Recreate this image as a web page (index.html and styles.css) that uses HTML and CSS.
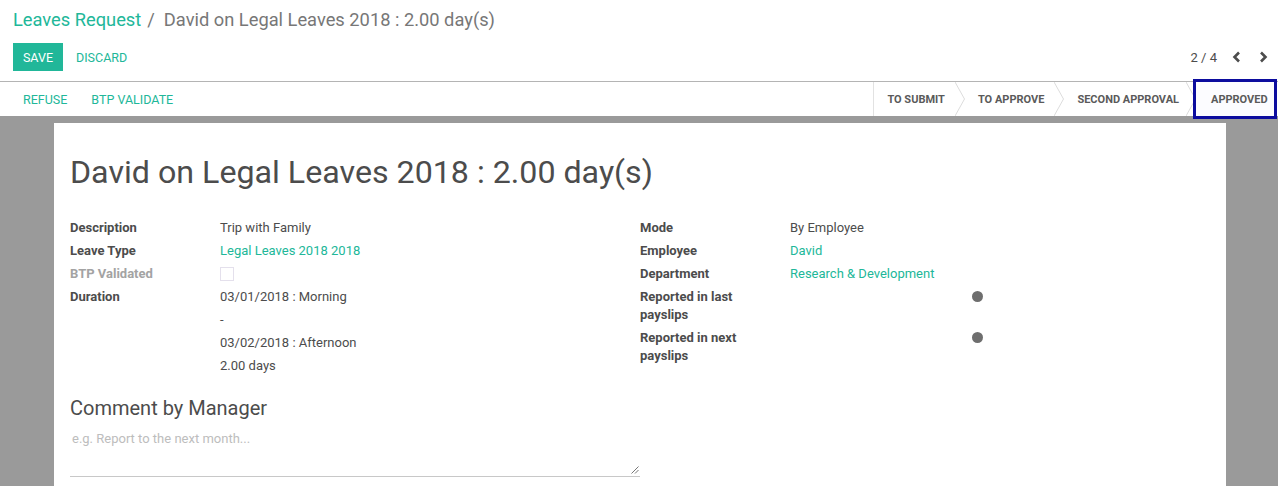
FILE: index.html
```html
<!DOCTYPE html>
<html>
<head>
<meta charset="utf-8">
<link rel="stylesheet" href="styles.css">
</head>
<body>
<div class="control-panel">
  <div class="breadcrumb">
    <span class="bc-link">Leaves Request</span><span class="bc-sep">/</span><span class="bc-active">David on Legal Leaves 2018 : 2.00 day(s)</span>
  </div>
  <div class="cp-row">
    <div class="cp-buttons">
      <button class="btn-primary">SAVE</button>
      <button class="btn-link">DISCARD</button>
    </div>
    <div class="pager">
      <span class="pager-value">2 / 4</span>
      <button class="pager-btn"><svg width="9" height="12" viewBox="0 0 9 12"><polyline points="7,1.5 2.5,6 7,10.5" fill="none" stroke="#4c4c4c" stroke-width="2.6"/></svg></button>
      <button class="pager-btn"><svg width="9" height="12" viewBox="0 0 9 12"><polyline points="2,1.5 6.5,6 2,10.5" fill="none" stroke="#4c4c4c" stroke-width="2.6"/></svg></button>
    </div>
  </div>
</div>
<div class="statusbar">
  <div class="sb-buttons">
    <button class="btn-link sb-btn">REFUSE</button>
    <button class="btn-link sb-btn">BTP VALIDATE</button>
  </div>
  <div class="sb-status">
    <div class="st first">TO SUBMIT<svg class="arrow" viewBox="0 0 10 34" preserveAspectRatio="none"><polyline points="0,0 9.5,17 0,34" fill="none" stroke="#dcdcdc" stroke-width="1"/></svg></div>
    <div class="st">TO APPROVE<svg class="arrow" viewBox="0 0 10 34" preserveAspectRatio="none"><polyline points="0,0 9.5,17 0,34" fill="none" stroke="#dcdcdc" stroke-width="1"/></svg></div>
    <div class="st third">SECOND APPROVAL<svg class="arrow" viewBox="0 0 10 34" preserveAspectRatio="none"><polyline points="0,0 9.5,17 0,34" fill="none" stroke="#dcdcdc" stroke-width="1"/></svg></div>
    <div class="st current">APPROVED</div>
  </div>
</div>
<div class="content">
  <div class="sheet">
    <h1 class="title">David on Legal Leaves 2018 : 2.00 day(s)</h1>
    <div class="groups">
      <div class="group">
        <div class="lbl">Description</div><div class="val">Trip with Family</div>
        <div class="lbl">Leave Type</div><div class="val link">Legal Leaves 2018 2018</div>
        <div class="lbl muted">BTP Validated</div><div class="val"><span class="checkbox"></span></div>
        <div class="lbl">Duration</div>
        <div class="val">
          <div class="dline">03/01/2018 : Morning</div>
          <div class="dline">-</div>
          <div class="dline">03/02/2018 : Afternoon</div>
          <div class="dline">2.00 days</div>
        </div>
      </div>
      <div class="group">
        <div class="lbl">Mode</div><div class="val">By Employee</div>
        <div class="lbl">Employee</div><div class="val link">David</div>
        <div class="lbl">Department</div><div class="val link">Research &amp; Development</div>
        <div class="lbl">Reported in last<br>payslips</div><div class="val"><span class="dot"></span></div>
        <div class="lbl">Reported in next<br>payslips</div><div class="val"><span class="dot"></span></div>
      </div>
    </div>
    <h2 class="sub">Comment by Manager</h2>
    <div class="textarea">
      <span class="placeholder">e.g. Report to the next month...</span>
      <svg class="grip" width="8" height="8" viewBox="0 0 8 8"><line x1="7.5" y1="0.5" x2="0.5" y2="7.5" stroke="#777" stroke-width="1"/><line x1="7.5" y1="4" x2="4" y2="7.5" stroke="#777" stroke-width="1"/></svg>
    </div>
  </div>
</div>
</body>
</html>
```
FILE: styles.css
```css
* { box-sizing: border-box; }
html, body { margin: 0; padding: 0; }
body {
  font-family: Roboto, "Liberation Sans", Arial, sans-serif;
  font-size: 13px;
  color: #4c4c4c;
  background: #fff;
  width: 1278px;
  height: 486px;
  overflow: hidden;
}
button {
  font-family: inherit;
  border: none;
  background: none;
  cursor: pointer;
  padding: 0;
  margin: 0;
}
.control-panel {
  padding: 8px 0 10px 13px;
  border-bottom: 1px solid #b4b4b4;
  height: 82px;
}
.breadcrumb {
  font-size: 18.3px;
  line-height: 24px;
  white-space: nowrap;
}
.bc-link { color: #21b799; }
.bc-sep { color: #777; margin: 0 9px 0 6px; }
.bc-active { color: #777; }
.cp-row {
  display: flex;
  justify-content: space-between;
  align-items: center;
  margin-top: 11px;
}
.cp-buttons { display: flex; align-items: center; gap: 3px; }
.btn-primary {
  background: #21b799;
  color: #fff;
  font-size: 12.5px;
  height: 28px;
  width: 50px;
  text-align: center;
  padding-top: 1px;
}
.btn-link {
  color: #21b799;
  font-size: 12.5px;
  height: 28px;
  padding: 1px 10px 0 10px;
}
.pager { display: flex; align-items: center; padding-right: 1px; }
.pager-value { font-size: 13px; color: #4c4c4c; margin-right: 6px; }
.pager-btn {
  width: 27px;
  height: 24px;
  display: flex;
  align-items: center;
  justify-content: center;
}
.statusbar {
  display: flex;
  justify-content: space-between;
  align-items: stretch;
  height: 34px;
  background: #fff;
}
.sb-buttons { display: flex; align-items: center; padding-left: 13px; gap: 2px; }
.sb-btn { height: 34px; padding-top: 0; padding-left: 10px; padding-right: 12px; }
.sb-status { display: flex; align-items: stretch; padding-right: 4px; }
.st {
  position: relative;
  display: flex;
  align-items: center;
  font-size: 11px;
  font-weight: 700;
  color: #5a5a5a;
  padding: 1px 20px 0 13px;
  white-space: nowrap;
}
.st.first { border-left: 1px solid #e2e2e2; padding-left: 13px; }
.st.third { padding-right: 17px; }
.st .arrow {
  position: absolute;
  right: 0;
  top: 0;
  width: 10px;
  height: 34px;
}
.st.current {
  padding: 1px 7px 0 15px;
  outline: 3px solid #0c0c9e;
  outline-offset: 0;
  background: #fcfcff;
  width: 78px;
}
.content {
  background: #9a9a9a;
  padding-top: 7px;
  height: 370px;
}
.sheet {
  width: 1172px;
  margin: 0 0 0 54px;
  background: #fff;
  padding: 24px 16px 0 16px;
  height: 400px;
}
.title {
  margin: 0;
  font-size: 32.2px;
  font-weight: 400;
  line-height: 50px;
  color: #4c4c4c;
}
.groups {
  display: grid;
  grid-template-columns: 570px 570px;
  margin-top: 22px;
}
.group {
  display: grid;
  grid-template-columns: 150px 1fr;
  align-content: start;
}
.lbl {
  font-weight: 700;
  line-height: 18px;
  padding-bottom: 5px;
}
.lbl.muted { color: #a3a3a3; }
.val {
  line-height: 18px;
  padding-bottom: 5px;
}
.val.link { color: #21b799; }
.dline { line-height: 18px; padding-bottom: 5px; }
.dline:last-child { padding-bottom: 0; }
.checkbox {
  display: inline-block;
  width: 14px;
  height: 14px;
  border: 1px solid #e4e0ec;
  vertical-align: -3px;
}
.dot {
  display: inline-block;
  width: 11px;
  height: 11px;
  border-radius: 50%;
  background: #6e6e6e;
  margin-left: 182px;
  vertical-align: -1px;
}
.sub {
  margin: 15px 0 0 0;
  font-size: 20px;
  font-weight: 400;
  line-height: 26px;
  color: #4c4c4c;
}
.textarea {
  position: relative;
  width: 570px;
  height: 56px;
  border-bottom: 1px solid #c8c8c8;
  padding: 9px 2px;
}
.placeholder { color: #bdbdbd; font-size: 13px; line-height: 18px; }
.grip { position: absolute; right: 1px; bottom: 2px; }
```
